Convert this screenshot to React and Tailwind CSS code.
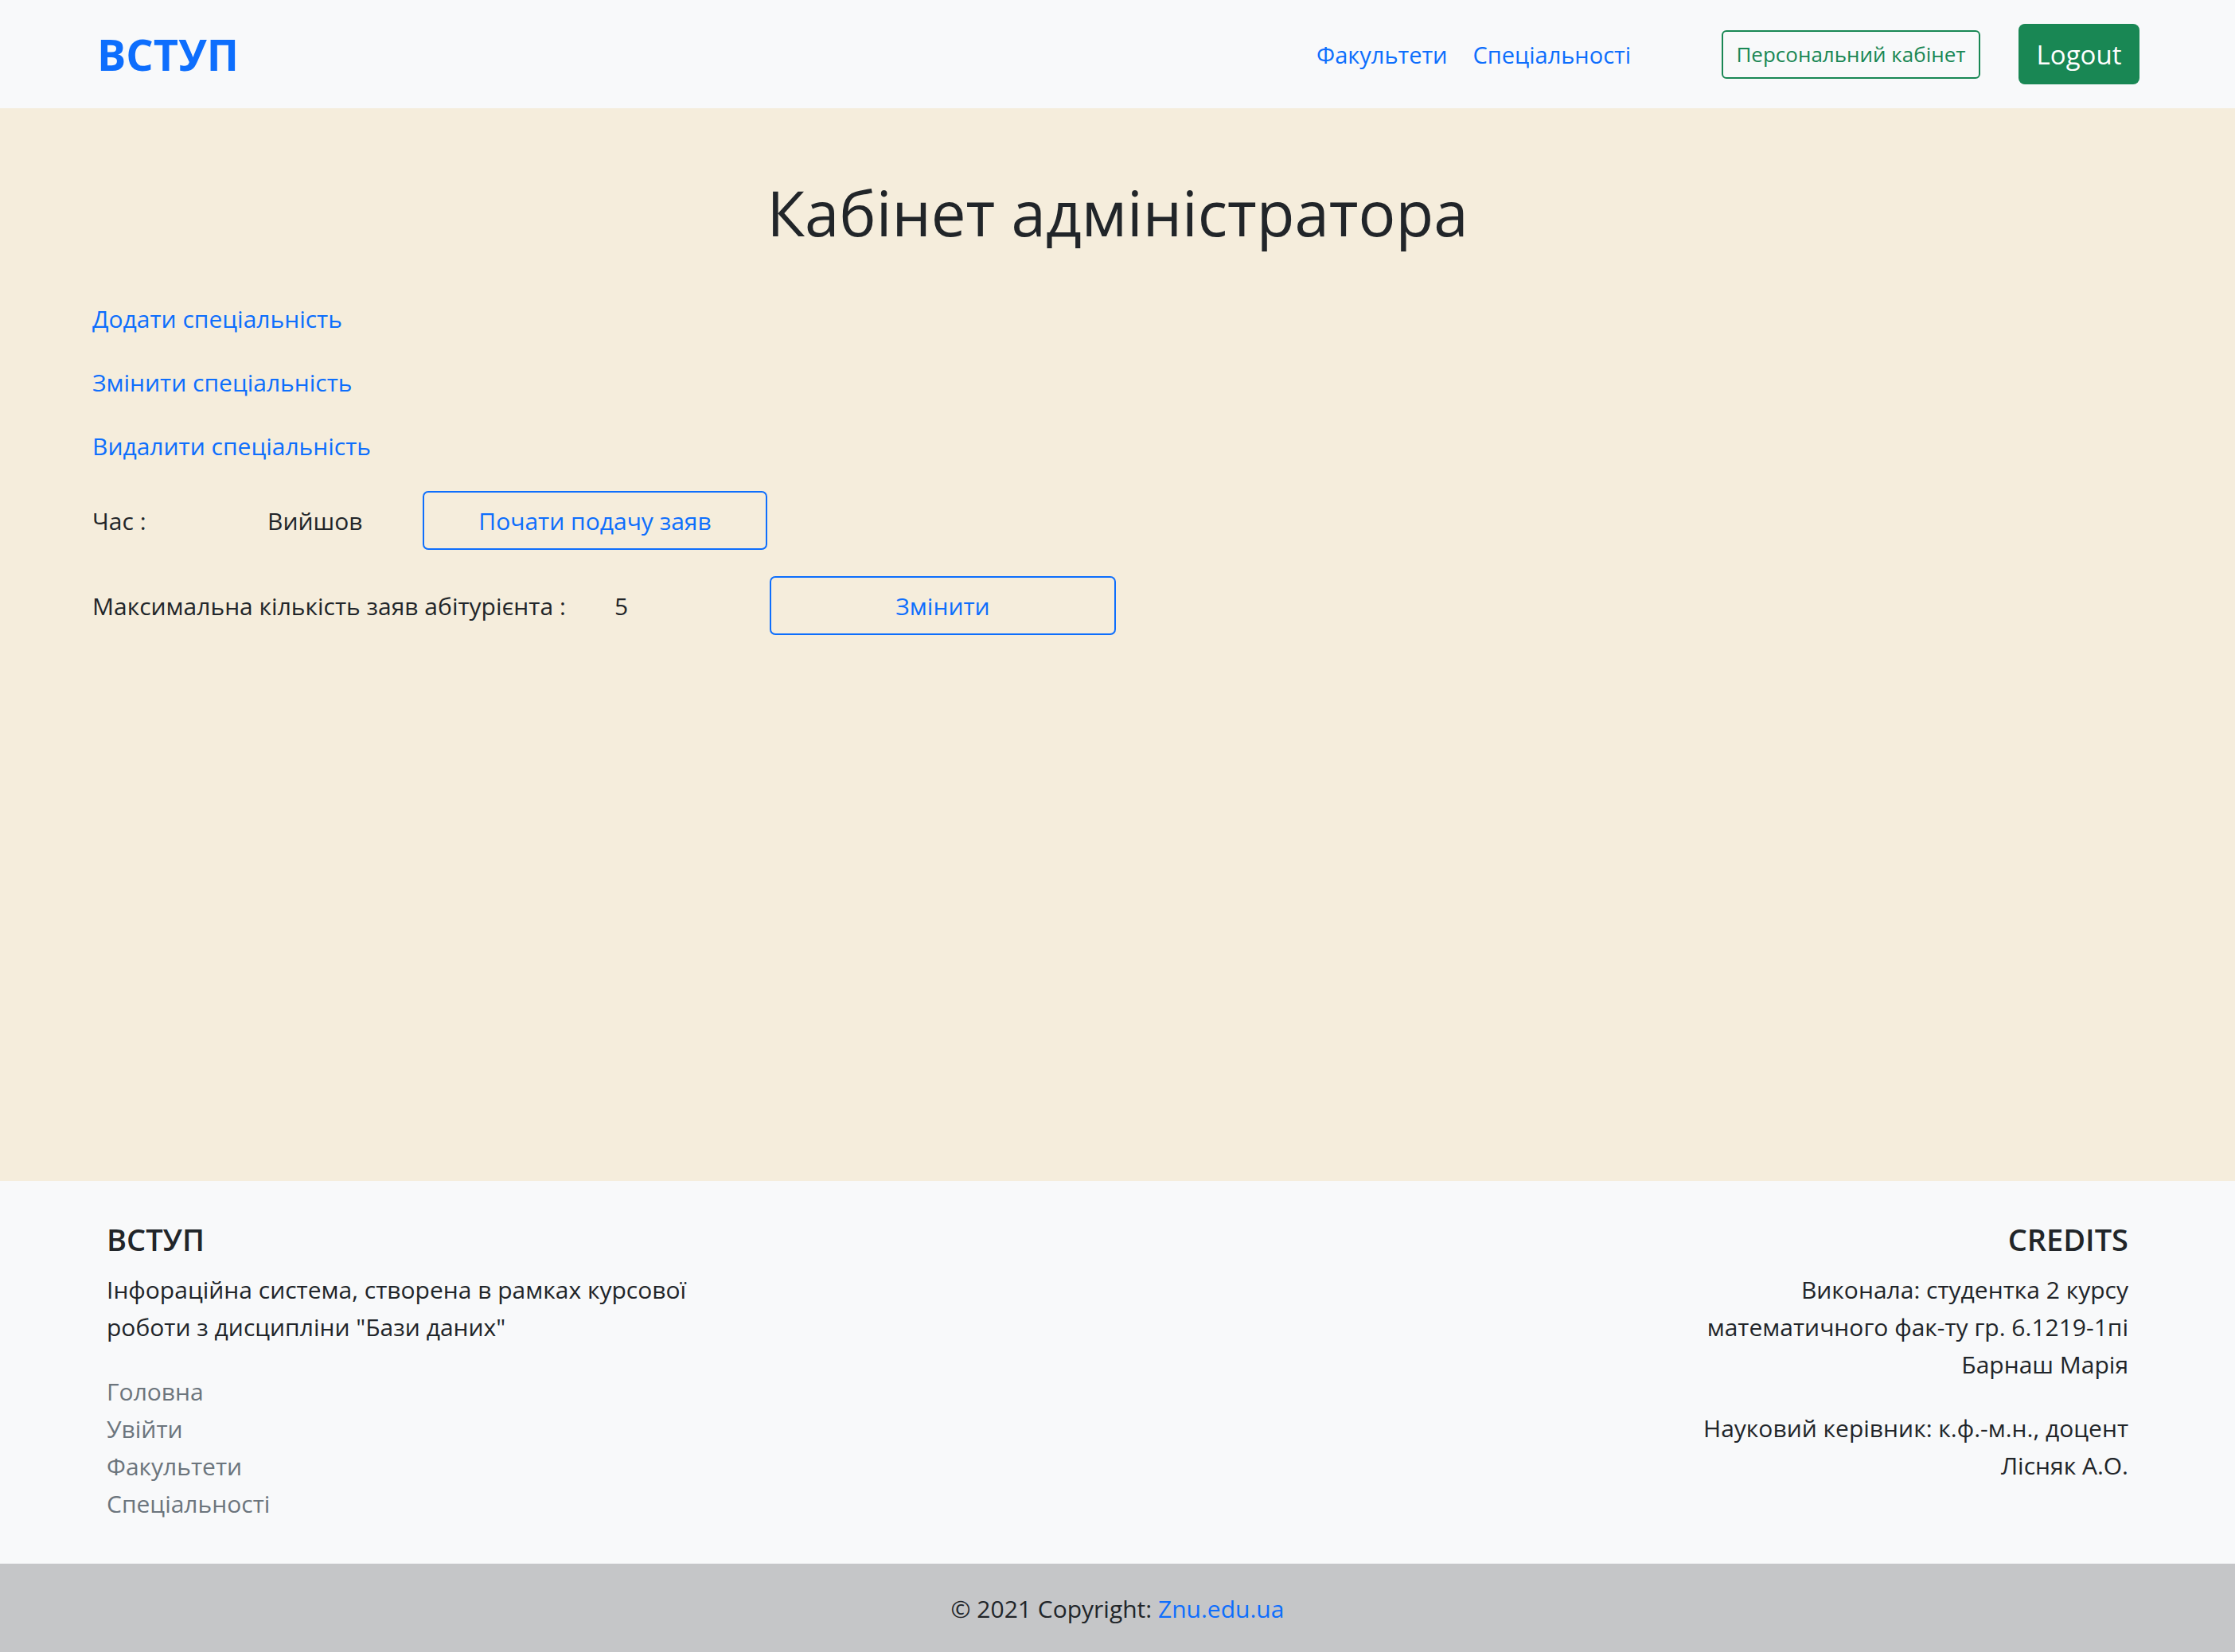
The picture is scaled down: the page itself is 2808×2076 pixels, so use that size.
import React from "react";

const navLinks = ["Факультети", "Спеціальності"];
const adminLinks = ["Додати спеціальність", "Змінити спеціальність", "Видалити спеціальність"];
const footerLinks = ["Головна", "Увійти", "Факультети", "Спеціальності"];

const App = () => {
  return (
    <div
      className="min-h-screen flex flex-col text-[30px] leading-[47px] text-[#212529]"
      style={{ fontFamily: '"Open Sans", "Noto Sans", sans-serif' }}
    >
      {/* Navbar */}
      <nav className="h-[136px] bg-[#f8f9fa] flex items-center pl-[122px] pr-[120px]">
        <a href="#" className="text-[54px] font-bold text-[#0d6efd] leading-none">ВСТУП</a>
        <div className="ml-auto flex items-center">
          <div className="flex gap-[32px]">
            {navLinks.map((l) => (
              <a key={l} href="#" className="text-[#0d6efd] text-[29px]">{l}</a>
            ))}
          </div>
          <button className="ml-[114px] w-[325px] h-[61px] border-2 border-[#198754] rounded-[6px] text-[#198754] text-[26px] leading-none">
            Персональний кабінет
          </button>
          <button className="ml-[48px] w-[152px] h-[76px] bg-[#198754] rounded-[8px] text-white text-[33px] leading-none">
            Logout
          </button>
        </div>
      </nav>

      {/* Main */}
      <main className="h-[1348px] bg-[#f5eddc] pt-[84px] px-[116px]">
        <h1 className="text-center text-[78px] leading-[94px] font-medium">Кабінет адміністратора</h1>

        <div className="mt-[63px] flex flex-col gap-[33px] items-start">
          {adminLinks.map((l) => (
            <a key={l} href="#" className="text-[#0d6efd]">{l}</a>
          ))}

          <div className="flex items-center">
            <span className="w-[220px]">Час :</span>
            <span className="w-[195px]">Вийшов</span>
            <button className="w-[433px] h-[74px] border-2 border-[#0d6efd] rounded-[7px] text-[#0d6efd]">
              Почати подачу заяв
            </button>
          </div>

          <div className="flex items-center">
            <span className="w-[656px]">Максимальна кількість заяв абітурієнта :</span>
            <span className="w-[195px]">5</span>
            <button className="w-[435px] h-[74px] border-2 border-[#0d6efd] rounded-[7px] text-[#0d6efd]">
              Змінити
            </button>
          </div>
        </div>
      </main>

      {/* Footer */}
      <footer className="bg-[#f8f9fa] pt-[50px] pb-[52px] px-[134px] flex justify-between">
        <div>
          <h5 className="text-[38px] leading-[46px] font-semibold">ВСТУП</h5>
          <p className="mt-[17px] w-[800px]">
            Інфораційна система, створена в рамках курсової роботи з дисципліни "Бази даних"
          </p>
          <ul className="mt-[34px]">
            {footerLinks.map((l) => (
              <li key={l}>
                <a href="#" className="text-[#6c757d]">{l}</a>
              </li>
            ))}
          </ul>
        </div>
        <div className="text-right">
          <h5 className="text-[38px] leading-[46px] font-semibold">CREDITS</h5>
          <p className="mt-[17px]">
            Виконала: студентка 2 курсу
            <br />
            математичного фак-ту гр. 6.1219-1пі
            <br />
            Барнаш Марія
          </p>
          <p className="mt-[33px]">
            Науковий керівник: к.ф.-м.н., доцент
            <br />
            Лісняк А.О.
          </p>
        </div>
      </footer>

      <div className="h-[112px] bg-[#c5c6c8] flex items-center justify-center">
        <span>
          © 2021 Copyright: <a href="#" className="text-[#0d6efd]">Znu.edu.ua</a>
        </span>
      </div>
    </div>
  );
};

export default App;
